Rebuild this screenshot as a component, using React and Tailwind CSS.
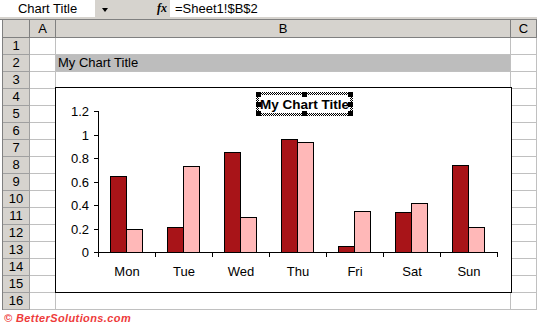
import React from "react";

const rows = Array.from({ length: 16 }, (_, i) => i + 1);

const days = [
  { d: "Mon", a: 0.65, b: 0.2 },
  { d: "Tue", a: 0.21, b: 0.73 },
  { d: "Wed", a: 0.855, b: 0.3 },
  { d: "Thu", a: 0.96, b: 0.94 },
  { d: "Fri", a: 0.05, b: 0.35 },
  { d: "Sat", a: 0.34, b: 0.415 },
  { d: "Sun", a: 0.74, b: 0.21 },
];

const yOf = (v) => 252 - v * 117.5;

// chart drawn in page coordinates
const Chart = () => {
  const ticks = [0, 0.2, 0.4, 0.6, 0.8, 1, 1.2];
  const handles = [
    [256, 92], [302, 92], [348, 92],
    [256, 102], [348, 102],
    [256, 111], [302, 111], [348, 111],
  ];
  return (
    <svg width="455" height="204" viewBox="56 88 455 204" className="block">
      <defs>
        <pattern id="chk" width="2" height="2" patternUnits="userSpaceOnUse">
          <rect width="1" height="1" fill="#000" />
          <rect x="1" y="1" width="1" height="1" fill="#000" />
        </pattern>
      </defs>

      {/* y axis */}
      <line x1="98.5" y1="111" x2="98.5" y2="252.5" stroke="#000" />
      {ticks.map((t) => (
        <g key={t}>
          <line x1="94" y1={Math.round(yOf(t)) + 0.5} x2="98" y2={Math.round(yOf(t)) + 0.5} stroke="#000" />
          <text
            x="89"
            y={Math.round(yOf(t)) + 5}
            textAnchor="end"
            fontSize="13"
            fontFamily="'Liberation Sans', Arial, sans-serif"
          >
            {t === 1 ? "1" : t === 0 ? "0" : t.toFixed(1)}
          </text>
        </g>
      ))}

      {/* x axis */}
      <line x1="98" y1="252.5" x2="498" y2="252.5" stroke="#000" />
      {Array.from({ length: 8 }, (_, i) => (
        <line key={i} x1={98.5 + 57 * i} y1="252" x2={98.5 + 57 * i} y2="257" stroke="#000" />
      ))}

      {days.map((c, i) => {
        const x0 = 98 + 57 * i;
        const ya = Math.round(yOf(c.a));
        const yb = Math.round(yOf(c.b));
        return (
          <g key={c.d}>
            <rect x={x0 + 12.5} y={ya + 0.5} width="16" height={252 - ya} fill="#a81418" stroke="#000" />
            <rect x={x0 + 28.5} y={yb + 0.5} width="16" height={252 - yb} fill="#ffb8b8" stroke="#000" />
            <text
              x={x0 + 29}
              y="276"
              textAnchor="middle"
              fontSize="13"
              fontFamily="'Liberation Sans', Arial, sans-serif"
            >
              {c.d}
            </text>
          </g>
        );
      })}

      {/* selected title */}
      <path
        d="M256 92 H353 V116 H256 Z M259 95 V113 H350 V95 Z"
        fill="url(#chk)"
        fillRule="evenodd"
      />
      {handles.map(([x, y], i) => (
        <rect key={i} x={x} y={y} width="5" height="5" fill="#000" />
      ))}
      <text
        x="304.5"
        y="109"
        textAnchor="middle"
        fontSize="13.5"
        fontWeight="bold"
        fontFamily="'Liberation Sans', Arial, sans-serif"
      >
        My Chart Title
      </text>
    </svg>
  );
};

export default function App() {
  return (
    <div className="relative w-[537px] h-[325px] overflow-hidden bg-white font-['Liberation_Sans',Arial,sans-serif] text-[13px] text-black">
      {/* formula bar */}
      <div className="flex h-[17px] bg-[#d6d3ce] leading-[17px]">
        <div className="w-[95px] bg-white text-center">Chart Title</div>
        <div className="w-[62px] relative">
          <span className="absolute left-[7px] top-[8px] w-0 h-0 border-l-[3.5px] border-r-[3.5px] border-t-[4px] border-l-transparent border-r-transparent border-t-black" />
        </div>
        <div className="w-[13px] font-['Liberation_Serif',serif] italic font-bold text-[12px]">fx</div>
        <div className="flex-1 bg-white pl-[5px]">=Sheet1!$B$2</div>
      </div>
      <div className="h-[3px] bg-[#d6d3ce] border-b border-[#808080]" />

      {/* grid */}
      <div className="ml-[2px] border-l border-[#808080] bg-white">
        <div className="flex h-[18px] leading-[17px] bg-[#d6d3ce]">
          <div className="w-[27px] border-r border-b border-[#808080]" />
          <div className="w-[26px] border-r border-b border-[#808080] text-center">A</div>
          <div className="w-[455px] border-r border-b border-[#808080] text-center">B</div>
          <div className="w-[26px] border-r border-b border-[#808080] text-center">C</div>
        </div>
        {rows.map((r) => (
          <div key={r} className="flex h-[17px] leading-[16px]">
            <div className="w-[27px] bg-[#d6d3ce] border-r border-b border-[#a0a0a0] text-center">{r}</div>
            <div className="w-[26px] border-r border-b border-[#c0c0c0]" />
            <div
              className={
                r === 2
                  ? "w-[455px] border-r border-b border-[#c0c0c0] bg-[#bdbdbd] pl-[2px]"
                  : "w-[455px] border-r border-b border-[#c0c0c0]"
              }
            >
              {r === 2 ? "My Chart Title" : ""}
            </div>
            <div className="w-[26px] border-r border-b border-[#c0c0c0]" />
          </div>
        ))}
      </div>

      <div className="pl-[4px] pt-[2px] italic font-bold text-[11px] leading-[13px] tracking-[0.4px] text-[#ee3b3b]">
        © BetterSolutions.com
      </div>

      {/* embedded chart object */}
      <div className="absolute left-[55px] top-[87px] w-[457px] h-[206px] border border-black bg-white">
        <Chart />
      </div>
    </div>
  );
}
